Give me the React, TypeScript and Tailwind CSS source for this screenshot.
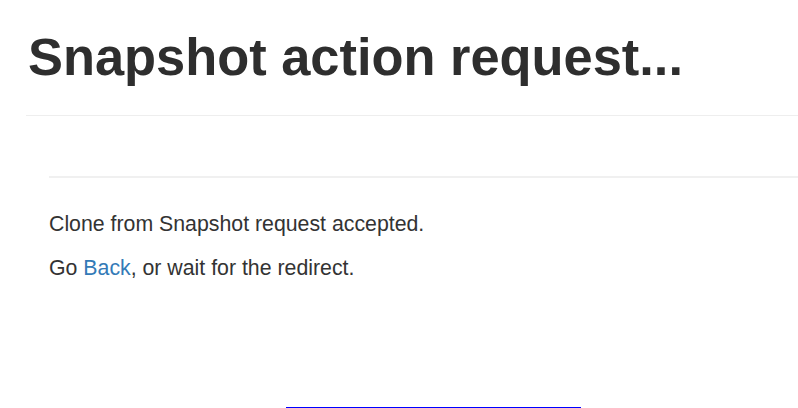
export default function App() {
  return (
    <main
      className="w-[798px] h-[408px] overflow-hidden bg-white text-[#333333]"
      style={{ fontFamily: '"Liberation Sans", Arial, sans-serif' }}
    >
      <div className="pl-[26px]">
        <h1 className="pt-[29px] pl-[2px] text-[52.4px] leading-[56px] font-bold text-[#2e2e2e]">
          Snapshot action request...
        </h1>
        <hr className="mt-[30px] border-0 border-t border-[#eeeeee]" />
        <div className="pl-[23px] pt-[60px]">
          <hr className="border-0 border-t-2 border-[#f0f0f0]" />
          <p className="mt-[32px] text-[21.3px] leading-[28px]">
            Clone from Snapshot request accepted.
          </p>
          <p className="mt-[16px] text-[21.3px] leading-[28px]">
            Go <a className="text-[#337ab7]">Back</a>, or wait for the redirect.
          </p>
        </div>
      </div>
      <div className="mt-[125px] ml-[286px] w-[295px] border-t-2 border-[#0000ff]" />
    </main>
  );
}
